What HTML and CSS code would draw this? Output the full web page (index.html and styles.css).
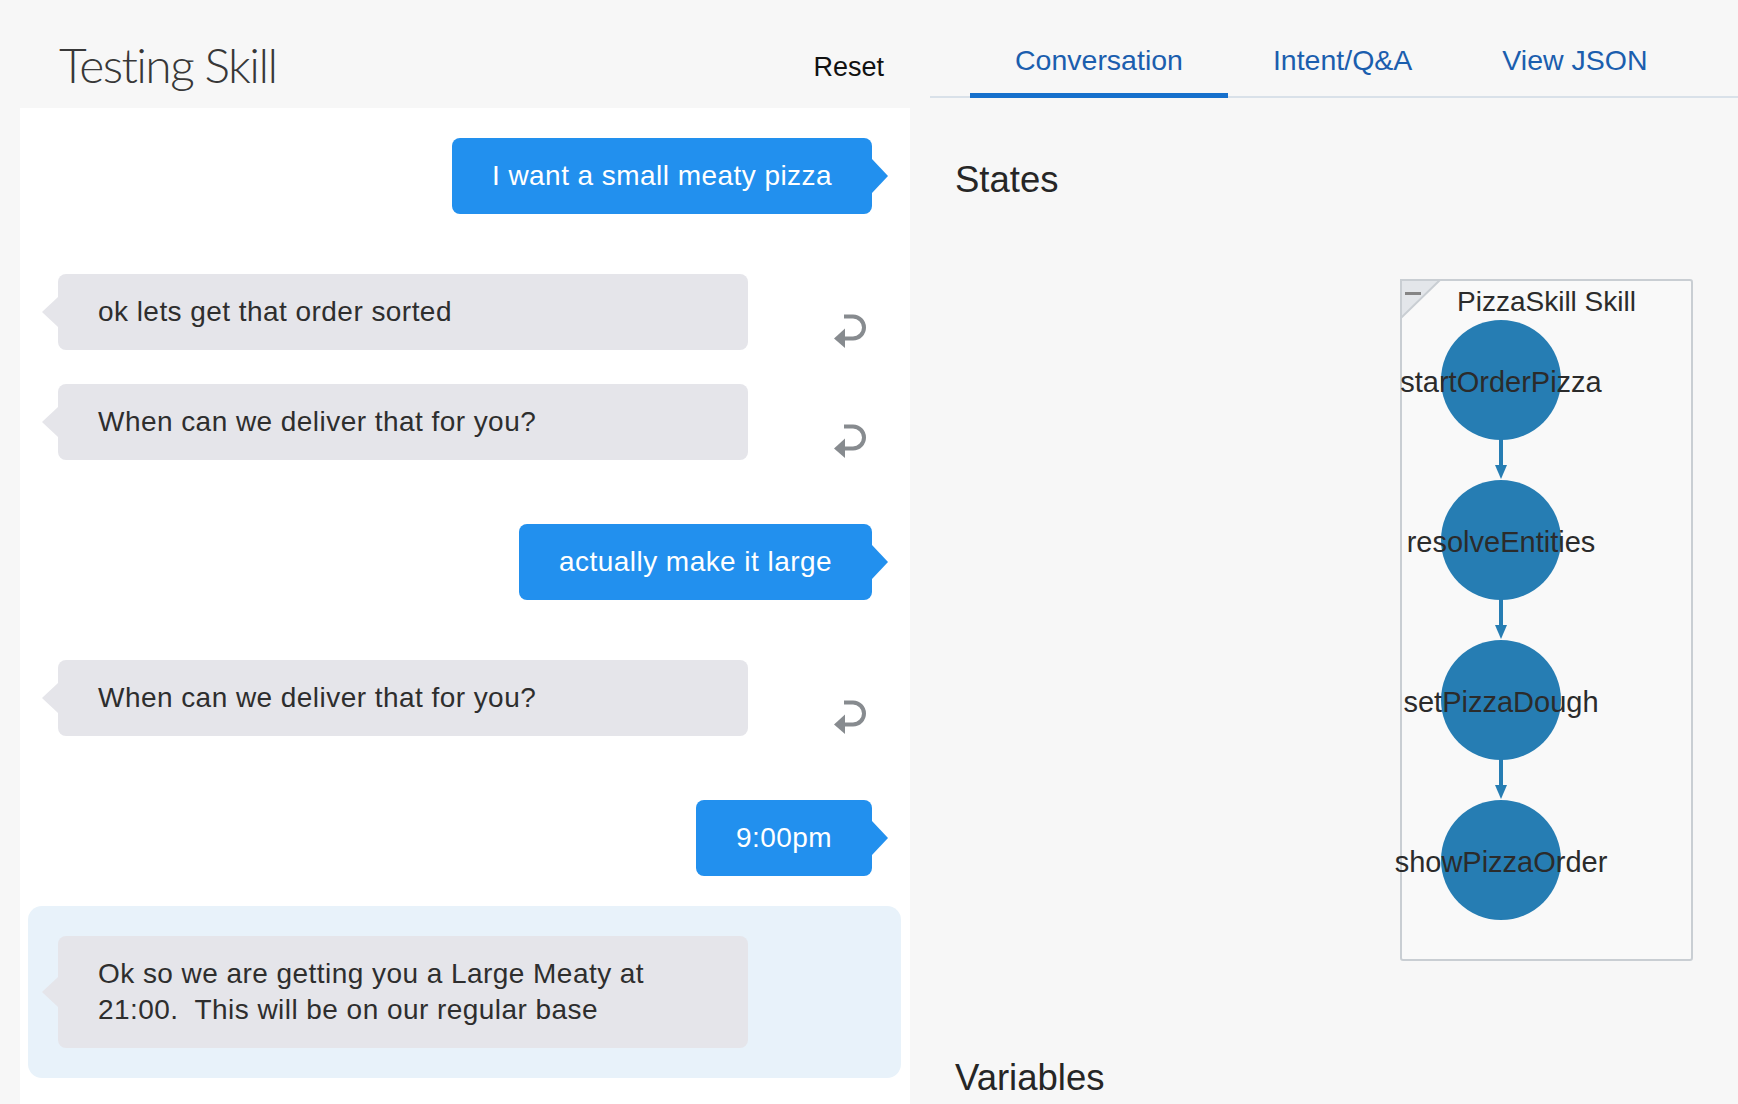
FILE: index.html
```html
<!DOCTYPE html>
<html lang="en">
<head>
<meta charset="utf-8">
<title>Testing Skill</title>
<link rel="stylesheet" href="styles.css">
</head>
<body>
<div class="app">
  <section class="left">
    <header class="left-header">
      <h1 class="title">Testing Skill</h1>
      <button class="reset">Reset</button>
    </header>
    <div class="chat">
      <div class="turn user-turn">
        <div class="bubble user">I want a small meaty pizza</div>
      </div>
      <div class="turn bot-turn">
        <div class="bot-row">
          <div class="bubble bot">ok lets get that order sorted</div>
          <svg class="reply" width="34" height="34" viewBox="0 0 34 34"><path d="M10 2.5H19A11 11 0 0 1 19 24.5H9" fill="none" stroke="#878b8f" stroke-width="4"/><polygon points="0,24.5 11,14.5 11,34" fill="#878b8f"/></svg>
        </div>
        <div class="bot-row">
          <div class="bubble bot">When can we deliver that for you?</div>
          <svg class="reply" width="34" height="34" viewBox="0 0 34 34"><path d="M10 2.5H19A11 11 0 0 1 19 24.5H9" fill="none" stroke="#878b8f" stroke-width="4"/><polygon points="0,24.5 11,14.5 11,34" fill="#878b8f"/></svg>
        </div>
      </div>
      <div class="turn user-turn">
        <div class="bubble user">actually make it large</div>
      </div>
      <div class="turn bot-turn">
        <div class="bot-row">
          <div class="bubble bot">When can we deliver that for you?</div>
          <svg class="reply" width="34" height="34" viewBox="0 0 34 34"><path d="M10 2.5H19A11 11 0 0 1 19 24.5H9" fill="none" stroke="#878b8f" stroke-width="4"/><polygon points="0,24.5 11,14.5 11,34" fill="#878b8f"/></svg>
        </div>
      </div>
      <div class="turn user-turn">
        <div class="bubble user">9:00pm</div>
      </div>
      <div class="turn bot-turn current">
        <div class="bot-row">
          <div class="bubble bot">Ok so we are getting you a Large Meaty at 21:00.&nbsp; This will be on our regular base</div>
        </div>
      </div>
    </div>
  </section>
  <section class="right">
    <nav class="tabs">
      <a class="tab active">Conversation</a>
      <a class="tab">Intent/Q&amp;A</a>
      <a class="tab">View JSON</a>
    </nav>
    <div class="right-body">
      <h2 class="section-title">States</h2>
      <svg class="diagram" width="783" height="700" viewBox="0 0 783 700">
        <rect x="446" y="10" width="291" height="680" rx="2" fill="#f9f9f9" stroke="#c9ced3" stroke-width="2"/>
        <polygon points="446,10 485,10 446,48" fill="#e3e6ea" stroke="#c9ced3" stroke-width="2"/>
        <rect x="450" y="22" width="16" height="3" fill="#858585"/>
        <text x="591.5" y="41" class="group-label">PizzaSkill Skill</text>
        <line x1="546" y1="168" x2="546" y2="197" stroke="#267db3" stroke-width="4"/>
        <polygon points="540,195 552,195 546,209" fill="#267db3"/>
        <line x1="546" y1="328" x2="546" y2="357" stroke="#267db3" stroke-width="4"/>
        <polygon points="540,355 552,355 546,369" fill="#267db3"/>
        <line x1="546" y1="488" x2="546" y2="517" stroke="#267db3" stroke-width="4"/>
        <polygon points="540,515 552,515 546,529" fill="#267db3"/>
        <circle cx="546" cy="110" r="60" fill="#267db3"/>
        <circle cx="546" cy="270" r="60" fill="#267db3"/>
        <circle cx="546" cy="430" r="60" fill="#267db3"/>
        <circle cx="546" cy="590" r="60" fill="#267db3"/>
        <text x="546" y="122" class="node-label">startOrderPizza</text>
        <text x="546" y="282" class="node-label">resolveEntities</text>
        <text x="546" y="442" class="node-label">setPizzaDough</text>
        <text x="546" y="602" class="node-label">showPizzaOrder</text>
      </svg>
      <h2 class="section-title variables">Variables</h2>
    </div>
  </section>
</div>
</body>
</html>
```
FILE: styles.css
```css
* { box-sizing: border-box; }
html, body { margin: 0; padding: 0; }
body {
  background: #f7f7f7;
  font-family: "Liberation Sans", Arial, sans-serif;
  color: #2b2b2b;
  overflow: hidden;
}
.app {
  display: flex;
  height: 1104px;
}
.left {
  width: 890px;
  margin-left: 20px;
  display: flex;
  flex-direction: column;
}
.left-header {
  height: 108px;
  display: flex;
  justify-content: space-between;
  align-items: flex-start;
  padding: 0 26px 0 39px;
}
.title {
  margin: 41px 0 0;
  font-family: Lato, "Liberation Sans", sans-serif;
  font-weight: 300;
  font-size: 48px;
  line-height: 48px;
  color: #383838;
  letter-spacing: -1.6px;
}
.reset {
  margin-top: 51px;
  border: none;
  background: none;
  padding: 0;
  font-family: "Liberation Sans", Arial, sans-serif;
  font-size: 27px;
  line-height: 32px;
  color: #111;
}
.chat {
  flex: 1;
  background: #fff;
}
.turn { display: flex; }
.user-turn {
  justify-content: flex-end;
  padding: 30px 38px 30px 0;
}
.bot-turn {
  flex-direction: column;
  gap: 34px;
  padding: 30px 0 34px 38px;
}
.bot-turn.current {
  margin: 0 9px 0 8px;
  padding: 30px 0 30px 30px;
  background: #e8f2fa;
  border-radius: 14px;
}
.bot-row {
  display: flex;
  align-items: flex-end;
}
.bubble {
  position: relative;
  font-size: 28px;
  line-height: 36px;
  letter-spacing: 0.45px;
  padding: 20px 40px;
  border-radius: 8px;
}
.bubble::after {
  content: "";
  position: absolute;
  top: 50%;
  width: 0;
  height: 0;
  border-top: 17px solid transparent;
  border-bottom: 17px solid transparent;
  transform: translateY(-50%);
}
.user {
  background: #2290ee;
  color: #fff;
}
.user::after {
  left: 100%;
  border-left: 16px solid #2290ee;
}
.bot {
  width: 690px;
  background: #e5e5ea;
  color: #2e2e2e;
}
.bot::after {
  right: 100%;
  border-top-width: 15px;
  border-bottom-width: 15px;
  border-right: 16px solid #e5e5ea;
}
.reply {
  flex: none;
  margin: 0 0 2px 86px;
}
.right {
  flex: 1;
  margin-left: 20px;
}
.tabs {
  display: flex;
  height: 98px;
  padding-left: 40px;
  border-bottom: 2px solid #d9e1e9;
}
.tab {
  height: 98px;
  margin-bottom: -2px;
  padding: 43px 45px 0;
  font-size: 28.5px;
  line-height: 34px;
  color: #1b5eae;
  cursor: pointer;
}
.tab.active {
  border-bottom: 5px solid #1670cc;
}
.right-body {
  padding-left: 25px;
}
.section-title {
  margin: 62px 0 0;
  font-weight: 400;
  font-size: 36.5px;
  line-height: 40px;
  color: #262626;
}
.diagram {
  display: block;
  margin-top: 70px;
  overflow: visible;
}
.section-title.variables {
  margin-top: 88px;
}
.group-label {
  font-family: "Liberation Sans", Arial, sans-serif;
  font-size: 28px;
  fill: #2b2b2b;
  text-anchor: middle;
}
.node-label {
  font-family: "Liberation Sans", Arial, sans-serif;
  font-size: 29px;
  fill: #2b2b2b;
  text-anchor: middle;
}
```
